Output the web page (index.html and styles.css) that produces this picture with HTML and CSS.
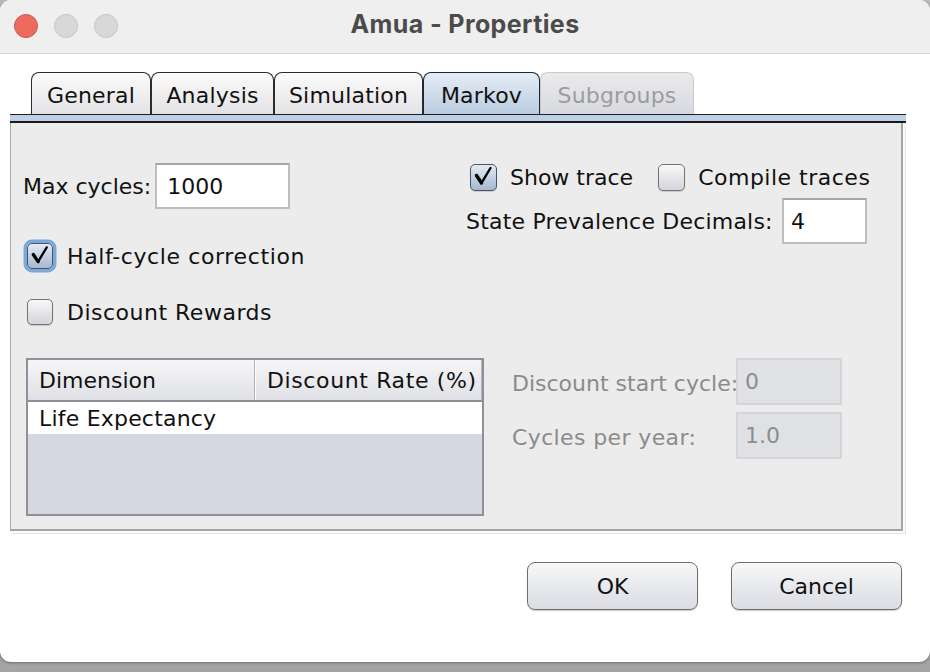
FILE: index.html
```html
<!DOCTYPE html>
<html>
<head>
<meta charset="utf-8">
<title>Amua - Properties</title>
<link rel="stylesheet" href="styles.css">
</head>
<body>
<div class="window">
  <div class="titlebar">
    <div class="lights">
      <span class="light red"></span>
      <span class="light"></span>
      <span class="light"></span>
    </div>
    <div class="title">Amua - Properties</div>
    <div></div>
  </div>
  <div class="body">
    <div class="tabpane">
      <div class="tabs">
        <div class="tab w-general">General</div>
        <div class="tab w-analysis">Analysis</div>
        <div class="tab w-simulation">Simulation</div>
        <div class="tab w-markov selected">Markov</div>
        <div class="tab w-subgroups disabled">Subgroups</div>
      </div>
      <div class="band"></div>
      <div class="panel">
        <div class="top">
          <div class="col-left">
            <div class="field-row">
              <span class="lbl">Max cycles:</span>
              <div class="field f-max">1000</div>
            </div>
            <div class="check-row row-half">
              <span class="cb checked focus"><svg viewBox="0 0 24 24" width="24" height="24"><path d="M4.5 11.5 L9.5 19" stroke="#000" stroke-width="3.4" stroke-linecap="round" fill="none"/><path d="M9.5 19 L18.5 4" stroke="#000" stroke-width="2.4" stroke-linecap="round" fill="none"/></svg></span>
              <span class="lbl ls-wide">Half-cycle correction</span>
            </div>
            <div class="check-row row-disc">
              <span class="cb"></span>
              <span class="lbl ls-mid">Discount Rewards</span>
            </div>
          </div>
          <div class="col-right">
            <div class="check-line">
              <div class="check-row tight">
                <span class="cb checked"><svg viewBox="0 0 24 24" width="24" height="24"><path d="M4.5 11.5 L9.5 19" stroke="#000" stroke-width="3.4" stroke-linecap="round" fill="none"/><path d="M9.5 19 L18.5 4" stroke="#000" stroke-width="2.4" stroke-linecap="round" fill="none"/></svg></span>
                <span class="lbl">Show trace</span>
              </div>
              <div class="check-row tight compile">
                <span class="cb"></span>
                <span class="lbl ls-mid">Compile traces</span>
              </div>
            </div>
            <div class="field-row spread">
              <span class="lbl ls-small">State Prevalence Decimals:</span>
              <div class="field f-dec">4</div>
            </div>
          </div>
        </div>
        <div class="bottom">
          <div class="table">
            <div class="thead">
              <div class="th c1">Dimension</div>
              <div class="th c2 ls-wide">Discount Rate (%)</div>
            </div>
            <div class="tr">
              <div class="td ls-small">Life Expectancy</div>
            </div>
          </div>
          <div class="dis-grid">
            <span class="dlbl">Discount start cycle:</span>
            <div class="field dis">0</div>
            <span class="dlbl ls-small2">Cycles per year:</span>
            <div class="field dis">1.0</div>
          </div>
        </div>
      </div>
    </div>
    <div class="buttons">
      <button class="btn">OK</button>
      <button class="btn">Cancel</button>
    </div>
  </div>
</div>
</body>
</html>
```
FILE: styles.css
```css
html, body {
  margin: 0;
  padding: 0;
}
body {
  width: 930px;
  height: 672px;
  overflow: hidden;
  background: linear-gradient(#b9b9b9, #a4a4a4);
  font-family: "DejaVu Sans", "Liberation Sans", sans-serif;
  font-size: 22px;
  color: #111;
}
.window {
  width: 930px;
  height: 662px;
  background: #fff;
  border-radius: 11px;
  overflow: hidden;
  box-shadow: 0 1px 3px rgba(0,0,0,0.35);
}
.titlebar {
  height: 53px;
  background: #efeff0;
  border-bottom: 1px solid #d4d4d4;
  display: grid;
  grid-template-columns: 1fr auto 1fr;
  align-items: center;
}
.lights {
  display: flex;
  gap: 16px;
  padding-left: 14px;
  padding-bottom: 2px;
}
.light {
  width: 24px;
  height: 24px;
  box-sizing: border-box;
  border-radius: 50%;
  background: #d8d8d8;
  border: 1px solid #c6c6c6;
}
.light.red {
  background: #ee6a5f;
  border-color: #d5544a;
}
.title {
  font-family: "Inter", "Liberation Sans", sans-serif;
  font-weight: 700;
  font-size: 25px;
  color: #4b4b4b;
  padding-bottom: 5px;
  letter-spacing: 0.4px;
}
.body {
  padding-top: 18px;
}
.tabpane {
  margin-left: 10px;
  margin-right: 24px;
}
.tabs {
  display: flex;
  padding-left: 21px;
  height: 42px;
}
.tab {
  box-sizing: border-box;
  height: 42px;
  border: 1.5px solid #2c2c2c;
  border-bottom: 0;
  border-radius: 8px 8px 0 0;
  background: linear-gradient(#fbfbfb, #e3e3e6);
  display: flex;
  align-items: center;
  justify-content: center;
  padding-top: 4px;
  color: #111;
  letter-spacing: 0.2px;
}
.w-general { width: 120px; }
.w-analysis { width: 123px; }
.w-simulation { width: 149px; }
.w-markov { width: 117px; }
.w-subgroups { width: 154px; }
.tab.selected {
  border-color: #17263a;
  background: linear-gradient(#e6edf5, #b8cce0);
}
.tab.disabled {
  border-color: #c8c9ce;
  background: linear-gradient(#ebebee, #d7d9de);
  color: #9c9c9c;
}
.band {
  height: 6px;
  background: #bdd0e4;
  border-top: 1px solid #1e1e2a;
  border-bottom: 2px solid #181822;
}
.panel {
  box-sizing: border-box;
  width: 893px;
  height: 408px;
  background: #ececec;
  border-left: 1px solid #a9a9a9;
  border-right: 2px solid #a4a4a4;
  border-bottom: 2px solid #a4a4a4;
  box-shadow: 2px 2px 0 #fbfbfb, 3px 3px 0 #e3e3e3;
  padding: 40px 0 0 12px;
}
.top {
  display: flex;
  height: 166px;
}
.col-left {
  width: 443px;
}
.col-right {
  width: 401px;
}
.field-row {
  display: flex;
  align-items: center;
  height: 46px;
  gap: 4px;
}
.field-row.spread {
  justify-content: space-between;
  margin-top: 7px;
}
.lbl {
  white-space: nowrap;
}
.ls-wide { letter-spacing: 0.62px; }
.ls-mid { letter-spacing: 0.5px; }
.ls-small { letter-spacing: 0.2px; }
.ls-small2 { letter-spacing: 0.38px; }
.field {
  box-sizing: border-box;
  height: 46px;
  background: #fff;
  border: 2px solid #bdbdbd;
  border-top-color: #a6a6a6;
  display: flex;
  align-items: center;
  padding-left: 10px;
  color: #111;
}
.f-max { width: 135px; }
.f-dec { width: 85px; padding-left: 7px; }
.check-row {
  display: flex;
  align-items: center;
  gap: 14px;
  height: 34px;
  padding-left: 4px;
}
.row-half { margin-top: 30px; }
.row-disc { margin-top: 22px; }
.cb {
  box-sizing: border-box;
  width: 26px;
  height: 26px;
  border-radius: 5px;
  border: 1.5px solid #737373;
  background: linear-gradient(#f8f8fa, #d3d5dc);
  box-shadow: 0 1px 1px rgba(0,0,0,0.15);
  display: flex;
  align-items: center;
  justify-content: center;
  flex: none;
}
.cb svg {
  display: block;
  margin-top: -3px;
  margin-left: 1px;
}
.cb.checked {
  border-color: #4a5462;
  background: linear-gradient(#e3eaf3, #a5b8d0);
}
.cb.focus {
  box-shadow: 0 0 0 3.5px #7aa8da;
}
.check-line {
  display: flex;
  height: 28px;
}
.check-row.tight {
  height: 28px;
  gap: 13px;
}
.check-row.tight .cb {
  width: 27px;
  height: 27px;
}
.check-row.compile {
  margin-left: 21px;
}
.bottom {
  display: flex;
  margin-top: 29px;
  padding-left: 3px;
}
.table {
  box-sizing: border-box;
  width: 458px;
  height: 158px;
  border: 2px solid #8f909a;
  background: #d5d8e0;
}
.thead {
  display: flex;
  height: 40px;
  border-bottom: 2px solid #8c8d96;
  background: linear-gradient(#f6f6f8, #dfe0e5);
}
.th {
  display: flex;
  align-items: center;
  padding-left: 11px;
  box-sizing: border-box;
  white-space: nowrap;
}
.th.c1 {
  width: 227px;
  border-right: 1px solid #b4b5bb;
  box-shadow: 1px 0 0 #fafafa;
}
.th.c2 {
  width: 227px;
  border-right: 1px solid #b4b5bb;
  padding-left: 12px;
}
.tr {
  height: 32px;
  background: #fff;
  display: flex;
  align-items: center;
}
.td {
  padding-left: 11px;
}
.dis-grid {
  margin-left: 28px;
  display: grid;
  grid-template-columns: 224px 106px;
  grid-auto-rows: 47px;
  row-gap: 7px;
  align-items: center;
}
.dlbl {
  color: #8b8b8b;
  white-space: nowrap;
  padding-top: 3px;
}
.field.dis {
  height: 47px;
  background: #dfe1e5;
  border: 2px solid #d3d5d9;
  color: #8d8d8d;
  padding-left: 7px;
}
.buttons {
  display: flex;
  justify-content: flex-end;
  gap: 33px;
  margin-top: 31px;
  padding-right: 28px;
}
.btn {
  box-sizing: border-box;
  width: 171px;
  height: 48px;
  border: 1.5px solid #6c6c6c;
  border-radius: 8px;
  background: linear-gradient(#f8f8fa, #e7e8ec 55%, #dcdde2);
  box-shadow: 0 1px 1px rgba(0,0,0,0.2);
  font-family: "DejaVu Sans", "Liberation Sans", sans-serif;
  font-size: 22px;
  color: #111;
  padding: 0;
}
```
